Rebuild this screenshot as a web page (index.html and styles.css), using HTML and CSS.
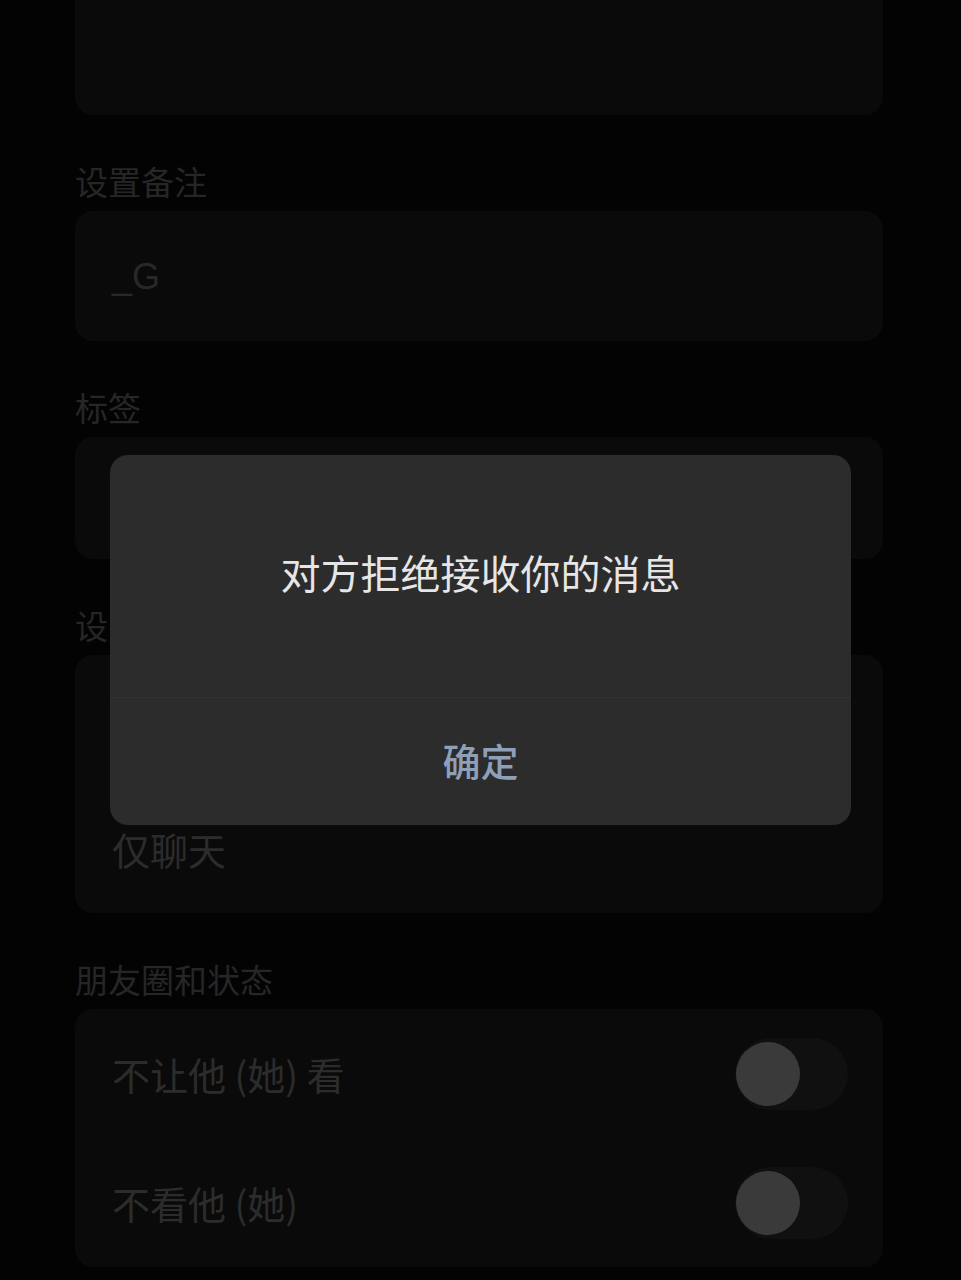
FILE: index.html
```html
<!DOCTYPE html>
<html lang="zh-CN">
<head>
<meta charset="utf-8">
<title>资料设置</title>
<link rel="stylesheet" href="styles.css">
</head>
<body>
<div class="page">
  <div class="card card-top"></div>

  <div class="label">设置备注</div>
  <div class="card card-input"><span class="input-text">_G</span></div>

  <div class="label">标签</div>
  <div class="card card-tags"></div>

  <div class="label">设置朋友权限</div>
  <div class="card">
    <div class="row"></div>
    <div class="row">仅聊天</div>
  </div>

  <div class="label">朋友圈和状态</div>
  <div class="card">
    <div class="row row-toggle">
      <span>不让他 (她) 看</span>
      <span class="toggle"><span class="knob"></span></span>
    </div>
    <div class="row row-toggle">
      <span>不看他 (她)</span>
      <span class="toggle"><span class="knob"></span></span>
    </div>
  </div>
</div>

<div class="dialog">
  <div class="dialog-msg">对方拒绝接收你的消息</div>
  <div class="dialog-btn">确定</div>
</div>
</body>
</html>
```

FILE: styles.css
```css
html, body {
  margin: 0;
  padding: 0;
  background: #030303;
}

body {
  width: 961px;
  height: 1280px;
  overflow: hidden;
  position: relative;
  font-family: "Noto Sans CJK SC", "Noto Sans", "Liberation Sans", sans-serif;
}

.page {
  padding: 0 78px 0 75px;
  display: flex;
  flex-direction: column;
}

.card {
  background: #0a0a0a;
  border-radius: 18px;
  display: flex;
  flex-direction: column;
}

.card-top {
  height: 115px;
  border-radius: 0 0 18px 18px;
}

.card-input {
  height: 130px;
  justify-content: center;
  padding-left: 37px;
}

.input-text {
  font-family: "Liberation Sans", "Noto Sans", sans-serif;
  font-size: 36px;
  color: #282828;
  line-height: 40px;
  margin-top: 2px;
}

.card-tags {
  height: 122px;
}

.label {
  margin-top: 46px;
  margin-bottom: 10px;
  height: 40px;
  line-height: 40px;
  font-size: 33px;
  color: #262626;
  white-space: nowrap;
}

.row {
  height: 129px;
  display: flex;
  align-items: center;
  padding: 0 35px 0 37px;
  font-size: 38px;
  color: #2c2c2c;
  white-space: nowrap;
}

.row-toggle {
  justify-content: space-between;
}

.toggle {
  width: 113px;
  height: 72px;
  border-radius: 36px;
  background: #101010;
  display: flex;
  align-items: center;
  padding-left: 1px;
  box-sizing: border-box;
}

.knob {
  width: 64px;
  height: 64px;
  border-radius: 50%;
  background: #3a3a3a;
}

.dialog {
  position: absolute;
  left: 110px;
  top: 455px;
  width: 741px;
  height: 370px;
  background: #2c2c2c;
  border-radius: 18px;
  display: flex;
  flex-direction: column;
}

.dialog-msg {
  height: 242px;
  display: flex;
  align-items: center;
  justify-content: center;
  font-size: 40px;
  color: #e6e6e6;
  padding-bottom: 8px;
  box-sizing: border-box;
}

.dialog-btn {
  flex: 1;
  border-top: 1px solid #333333;
  display: flex;
  align-items: center;
  justify-content: center;
  font-size: 38px;
  font-weight: 500;
  color: #8e9fb8;
  padding-bottom: 4px;
}
```
